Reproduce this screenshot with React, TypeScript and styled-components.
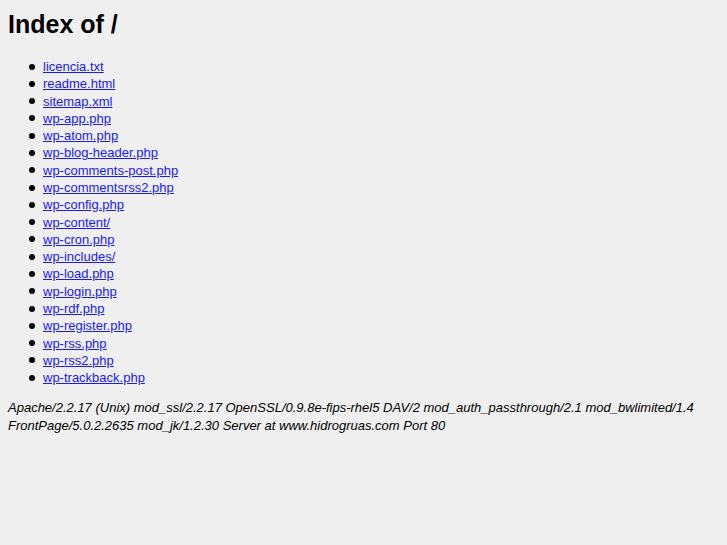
import styled, { createGlobalStyle } from "styled-components";

const GlobalStyle = createGlobalStyle`
  html, body {
    margin: 0;
    background: #efefef;
  }
  body {
    padding: 8px;
    font-family: "Liberation Sans", Arial, sans-serif;
    font-size: 13px;
    color: #000000;
  }
`;

const files = [
  "licencia.txt",
  "readme.html",
  "sitemap.xml",
  "wp-app.php",
  "wp-atom.php",
  "wp-blog-header.php",
  "wp-comments-post.php",
  "wp-commentsrss2.php",
  "wp-config.php",
  "wp-content/",
  "wp-cron.php",
  "wp-includes/",
  "wp-load.php",
  "wp-login.php",
  "wp-rdf.php",
  "wp-register.php",
  "wp-rss.php",
  "wp-rss2.php",
  "wp-trackback.php",
];

export default function App() {
  return (
    <>
      <GlobalStyle />
      <Heading>Index of /</Heading>
      <FileList>
        {files.map((f) => (
          <FileItem key={f}>
            <FileLink href={f}>{f}</FileLink>
          </FileItem>
        ))}
      </FileList>
      <Address>
        Apache/2.2.17 (Unix) mod_ssl/2.2.17 OpenSSL/0.9.8e-fips-rhel5 DAV/2
        mod_auth_passthrough/2.1 mod_bwlimited/1.4 FrontPage/5.0.2.2635
        mod_jk/1.2.30 Server at www.hidrogruas.com Port 80
      </Address>
    </>
  );
}

const Heading = styled.h1`
  margin: 0;
  font-size: 25px;
  line-height: 32px;
  font-weight: bold;
`;

const FileList = styled.ul`
  margin: 18px 0 0 0;
  padding-left: 21px;
  list-style: none;
`;

const FileItem = styled.li`
  display: flex;
  align-items: center;
  gap: 8px;
  line-height: 17.28px;
  &::before {
    content: "";
    width: 6px;
    height: 6px;
    border-radius: 50%;
    background: #000000;
    flex-shrink: 0;
  }
`;

const FileLink = styled.a`
  color: #1a1aee;
  text-decoration: underline;
`;

const Address = styled.address`
  margin-top: 13px;
  font-style: italic;
  line-height: 18px;
  max-width: 700px;
`;
